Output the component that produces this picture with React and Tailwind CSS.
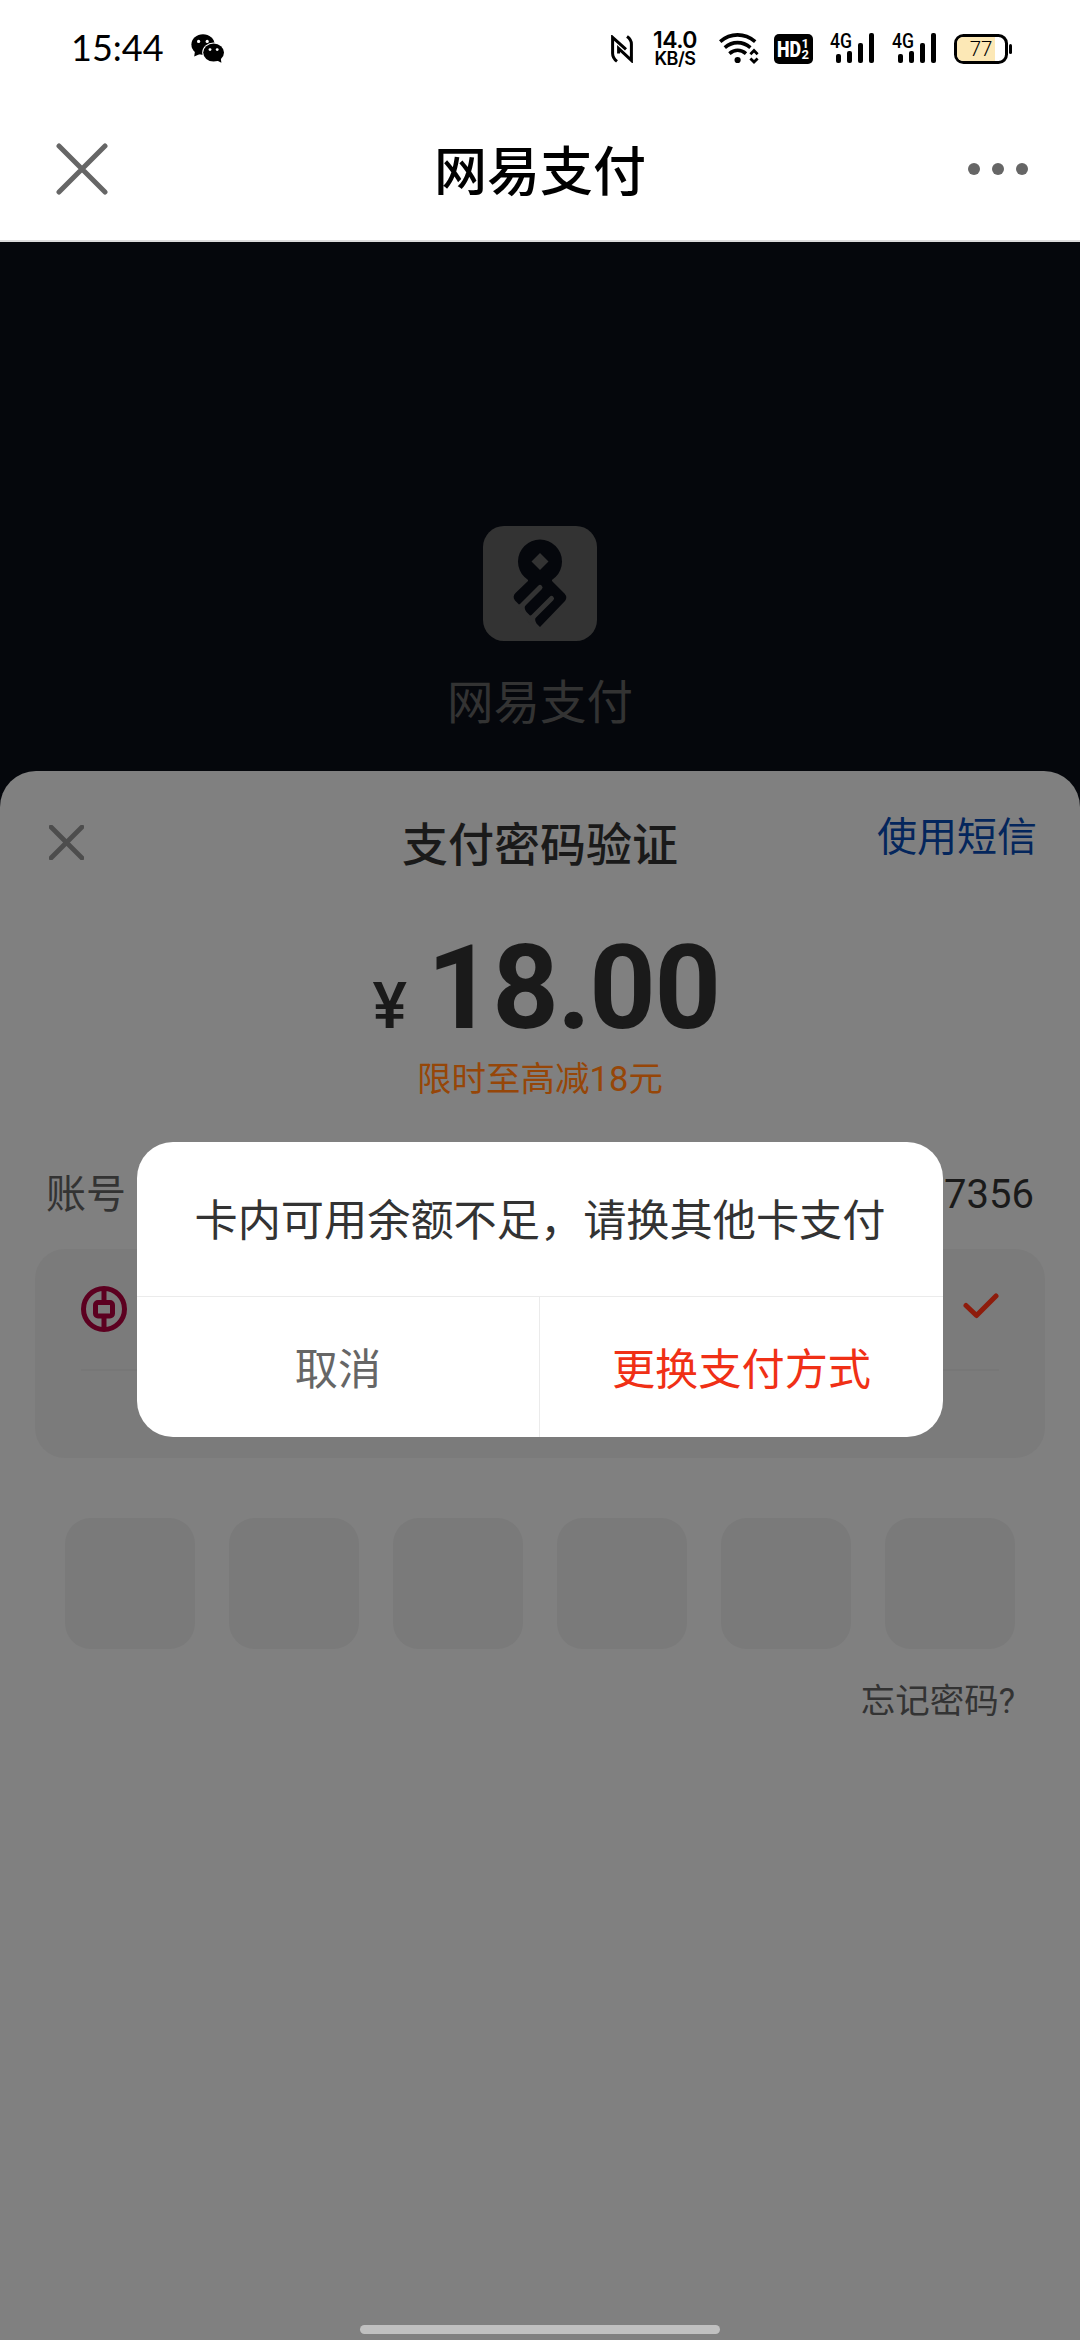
const PIN_LENGTH = 6;

function CloseIcon({ className, strokeWidth }) {
  return (
    <svg viewBox="0 0 52 52" className={className} fill="none" stroke="currentColor" strokeWidth={strokeWidth} strokeLinecap="round">
      <path d="M3 3 49 49M49 3 3 49" />
    </svg>
  );
}

function WechatIcon() {
  return (
    <svg viewBox="0 0 34 30" className="h-[30px] w-[34px]">
      <path d="M4 17 3.2 22.6 9 20Z" />
      <ellipse cx="12" cy="10.6" rx="11.6" ry="10.4" />
      <circle cx="7.6" cy="7.4" r="1.6" fill="#fff" />
      <circle cx="16.2" cy="7.4" r="1.6" fill="#fff" />
      <ellipse cx="22.6" cy="18.6" rx="11.4" ry="10" fill="#fff" />
      <path d="M25 26 30.4 28.8 29.6 23Z" />
      <ellipse cx="22.6" cy="18.6" rx="10.4" ry="9" />
      <circle cx="19" cy="15.6" r="1.4" fill="#fff" />
      <circle cx="26.2" cy="15.6" r="1.4" fill="#fff" />
    </svg>
  );
}

function NfcIcon() {
  return (
    <svg viewBox="0 0 22 28" className="h-7 w-[22px]" fill="none" stroke="#000" strokeWidth="3">
      <path d="M6 26.400C2.800 24 1.600 22 1.600 18.500V2.400L15 14.400" />
      <path d="M16 1.400C19.200 3.600 20.400 5.600 20.400 9.100V25.400L7.600 13.400V18.600" />
    </svg>
  );
}

function WifiIcon() {
  return (
    <svg viewBox="0 0 40 31" className="h-[31px] w-10" fill="none" stroke="#000" strokeWidth="3.6">
      <path d="M1.2 8.6C11.5-.4 25.500-.4 36.2 8.6" />
      <path d="M5.8 14.6C13.5 8 23.5 8 31.4 14.6" />
      <path d="M10.4 20.6C15.5 16.3 21.8 16.3 27 20.6" />
      <circle cx="18.6" cy="27" r="3.1" fill="#000" stroke="none" />
      <path d="M31.4 21.2 35 17.6 38.6 21.2M31.4 25.4 35 29 38.6 25.4" strokeWidth="2.8" />
    </svg>
  );
}

function HdIcon() {
  return (
    <svg viewBox="0 0 39 30" className="h-[30px] w-[39px]" fontFamily="Roboto, sans-serif" fontWeight="700" fill="#fff">
      <rect width="39" height="30" rx="5" fill="#000" />
      <text x="3" y="22.6" fontSize="21.5" fontWeight="900" textLength="24" lengthAdjust="spacingAndGlyphs">HD</text>
      <text x="27.6" y="14" fontSize="13">1</text>
      <text x="27.6" y="25" fontSize="13">2</text>
    </svg>
  );
}

function SignalIcon() {
  return (
    <svg viewBox="0 0 45 31" className="h-[31px] w-[45px] overflow-visible">
      <text x="0" y="15" fontFamily="Roboto, sans-serif" fontWeight="500" fontSize="19.5" textLength="22" lengthAdjust="spacingAndGlyphs">4G</text>
      <rect x="6" y="21" width="5" height="9" rx="2" />
      <rect x="17" y="18" width="5" height="12" rx="2" />
      <rect x="28" y="10" width="5" height="20" rx="2" />
      <rect x="39" y="0" width="5" height="30" rx="2" />
    </svg>
  );
}

function BatteryIcon({ level }) {
  return (
    <svg viewBox="0 0 58 30" className="h-[30px] w-[58px]">
      <rect x="1.5" y="1.5" width="51" height="27" rx="8" fill="#fff" stroke="#000" strokeWidth="3" />
      <path d="M9 3H41V27H9A6 6 0 0 1 3 21V9A6 6 0 0 1 9 3Z" fill="#fce8b6" />
      <rect x="55" y="10" width="3" height="10" rx="1.5" />
      <text x="27" y="22" textAnchor="middle" fontFamily="Roboto, sans-serif" fontWeight="300" fontSize="20.5">{level}</text>
    </svg>
  );
}

function StatusBar() {
  return (
    <div className="flex h-[97px] items-center justify-between pl-[71px] pr-[68px] text-black">
      <div className="flex items-center gap-[27px]">
        <span className="pb-1 font-['Lato',sans-serif] text-[36px] leading-none">15:44</span>
        <WechatIcon />
      </div>
      <div className="flex items-center">
        <NfcIcon />
        <div className="ml-[17px] mr-0.5 flex w-[50px] flex-col items-center font-['Inter',sans-serif] font-semibold">
          <span className="text-[23px] leading-[19px] tracking-tight">14.0</span>
          <span className="text-[18px] leading-[17px] tracking-tight">KB/S</span>
        </div>
        <div className="ml-[17px] flex items-center">
          <WifiIcon />
        </div>
        <div className="ml-[15px] flex items-center gap-[17px]">
          <HdIcon />
          <SignalIcon />
          <SignalIcon />
        </div>
        <div className="ml-[17px]">
          <BatteryIcon level={77} />
        </div>
      </div>
    </div>
  );
}

function TitleBar() {
  return (
    <header className="grid h-[145px] grid-cols-3 items-center border-b-2 border-[#dcdcdc] pl-[56px] pr-[52px]">
      <CloseIcon className="h-[52px] w-[52px] text-[#666]" strokeWidth={5} />
      <h1 className="pt-2.5 pr-1 text-center text-[53px] font-medium leading-none text-black">网易支付</h1>
      <div className="flex gap-3 justify-self-end">
        <span className="h-3 w-3 rounded-full bg-[#666]" />
        <span className="h-3 w-3 rounded-full bg-[#666]" />
        <span className="h-3 w-3 rounded-full bg-[#666]" />
      </div>
    </header>
  );
}

function BrandLogo() {
  return (
    <div className="flex flex-col items-center pt-[284px] text-[#333]">
      <svg viewBox="0 0 114 115" className="h-[115px] w-[114px]">
        <rect width="114" height="115" rx="21" fill="currentColor" />
        <g fill="#05070c">
          <circle cx="57" cy="35.5" r="22" />
          <path d="M45 51H69V55L81.500 67.500Q85 71.500 81.500 75.500L57 101L53.500 97.500Q50.500 93 54 89L47 89.500L43.500 86Q40 81.500 43.500 77.500L36 78.500L32 74.500Q29 70.500 32.500 67L45 55Z" />
        </g>
        <path d="M57 27 65.500 35.500 57 44 48.500 35.500Z" fill="currentColor" />
        <g stroke="currentColor" strokeWidth="5" strokeLinecap="round">
          <path d="M57 61.500 36 82.500M68.500 72.500 47 94" />
        </g>
      </svg>
      <p className="mt-[37px] text-[46.5px] font-normal leading-[50px]">网易支付</p>
    </div>
  );
}

function BankIcon() {
  return (
    <svg viewBox="0 0 46 46" className="h-[46px] w-[46px]" fill="none" stroke="#5c0020" strokeWidth="5">
      <circle cx="23" cy="23" r="20.5" />
      <rect x="14.5" y="16.5" width="17" height="13.5" rx="2.5" />
      <path d="M23 3V16M23 30V43" />
    </svg>
  );
}

function PaymentSheet() {
  return (
    <section className="flex-1 rounded-t-[36px] bg-[#808080] text-[#1a1a1a]">
      <div className="grid h-[146px] grid-cols-[1fr_auto_1fr] items-center px-[43px]">
        <CloseIcon className="mb-1 ml-1.5 h-[35px] w-[35px] text-[#4d4d4d]" strokeWidth={7} />
        <h2 className="pt-0.5 text-[46px] font-medium leading-none">支付密码验证</h2>
        <button className="justify-self-end pb-3 text-[40px] leading-none text-[#04265c]">使用短信</button>
      </div>

      <div className="mt-[13px] flex h-[117px] items-baseline justify-center pl-3 font-['Roboto','Noto_Sans_CJK_SC',sans-serif] leading-[116px]">
        <span className="mr-5 text-[65px] font-medium">¥</span>
        <span className="text-[116px] font-bold tracking-[-1.5px]">18.00</span>
      </div>
      <p className="mt-3 text-center text-[34.5px] leading-[40px] text-[#964608]">限时至高减18元</p>

      <div className="mt-[76px] flex items-center justify-between px-[46px] text-[40px] leading-[40px]">
        <span className="text-[#333]">账号</span>
        <span>7356</span>
      </div>

      <div className="mx-[35px] mt-[34px] h-[209px] rounded-[30px] bg-[#7b7b7b] px-[46px]">
        <div className="flex h-[122px] items-center justify-between border-b-2 border-[#777]">
          <BankIcon />
          <svg viewBox="0 0 36 26" className="mb-1.5 h-[26px] w-9" fill="none" stroke="#8e1c0c" strokeWidth="5" strokeLinecap="round" strokeLinejoin="round">
            <path d="M3 12.500 13.500 22.500 33 3" />
          </svg>
        </div>
      </div>

      <div className="mt-[60px] flex justify-between px-[65px]">
        {Array.from({ length: PIN_LENGTH }, (_, i) => (
          <div key={i} className="h-[131px] w-[130px] rounded-[26px] bg-[#7a7a7a]" />
        ))}
      </div>
      <p className="mt-8 pr-[65px] text-right text-[34.5px] leading-[40px] text-[#333]">忘记密码?</p>
    </section>
  );
}

function BalanceDialog() {
  return (
    <div role="dialog" className="h-[295px] w-[806px] overflow-hidden rounded-[36px] bg-white text-[43.2px] leading-none">
      <p className="flex h-[154px] items-center justify-center whitespace-nowrap pt-1.5 text-[#333]">
        卡内可用余额不足，请换其他卡支付
      </p>
      <div className="grid h-[141px] grid-cols-2 border-t border-[#ebebeb]">
        <button className="border-r border-[#ebebeb] pt-2 text-[#666]">取消</button>
        <button className="pt-2 text-[#f03016]">更换支付方式</button>
      </div>
    </div>
  );
}

export default function App() {
  return (
    <div className="flex h-[2340px] w-[1080px] flex-col overflow-hidden bg-white font-['Roboto','Noto_Sans_CJK_SC',sans-serif]">
      <StatusBar />
      <TitleBar />
      <main className="relative flex flex-1 flex-col bg-[#05070c]">
        <div className="h-[529px]">
          <BrandLogo />
        </div>
        <PaymentSheet />
        <div className="absolute inset-0 flex items-center justify-center pb-[3px]">
          <BalanceDialog />
        </div>
        <div className="absolute bottom-1.5 left-1/2 h-[9px] w-[360px] -translate-x-1/2 rounded-full bg-[#c0c0c0]" />
      </main>
    </div>
  );
}
